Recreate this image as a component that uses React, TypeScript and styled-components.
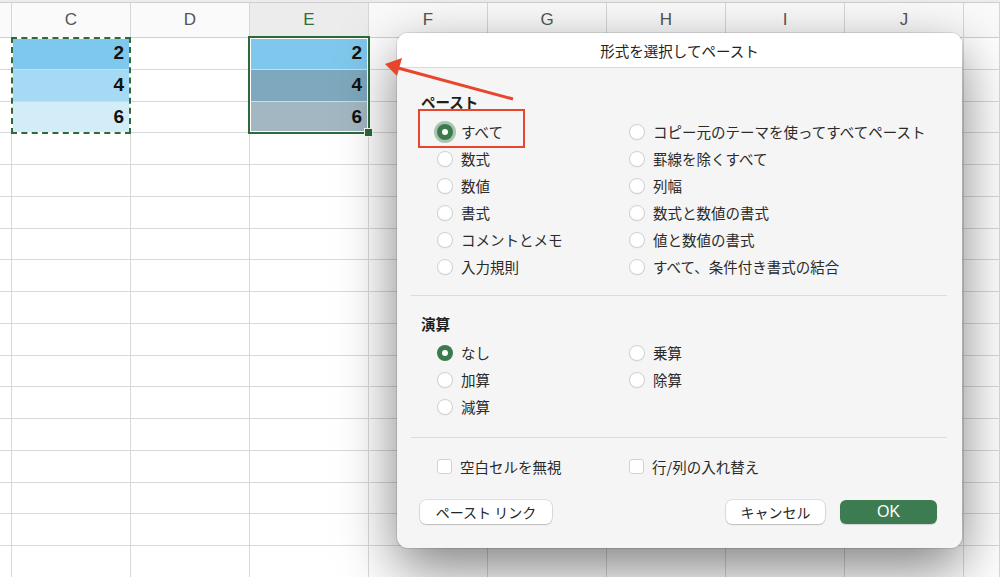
import React from 'react';
import styled, {createGlobalStyle, css} from "styled-components";

const GlobalStyle = createGlobalStyle`
    html, body {
        margin:0;
        padding:0;
        background:#ffffff;
    }
    body {
        font-family: "Noto Sans CJK JP", "Noto Sans", sans-serif;
    }
`;

const Page = styled.div`
    position:relative;
    width:1000px;
    height:577px;
    overflow:hidden;
    background:#ffffff;
`;

const TopStrip = styled.div`
    height:2px;
    background:#ececec;
    border-bottom:1px solid #cfcfcf;
`;

const Sheet = styled.div`
    display:grid;
    grid-template-columns: 12px repeat(8, 119px) 1fr;
    grid-template-rows: 35px;
    grid-auto-rows: 31.75px;
`;

const HeadCell = styled.div<{ $active?: boolean }>`
    box-sizing:border-box;
    border-right:1px solid #d6d6d6;
    border-bottom:1px solid #cfcfcf;
    background:${({$active}) => $active ? "#ececec" : "#fafafa"};
    color:${({$active}) => $active ? "#2f6e3f" : "#555555"};
    font-family: "Liberation Sans", "Noto Sans", sans-serif;
    font-size:17px;
    display:flex;
    align-items:center;
    justify-content:center;
`;

const Cell = styled.div<{ $bg?: string }>`
    box-sizing:border-box;
    border-right:1px solid #d9d9d9;
    border-bottom:1px solid #d9d9d9;
    background:${({$bg}) => $bg || "#ffffff"};
    font-family: "Liberation Sans", "Noto Sans", sans-serif;
    font-weight:700;
    font-size:19px;
    color:#111;
    display:flex;
    align-items:center;
    justify-content:flex-end;
    padding-right:6px;
`;

const CopyMarquee = styled.div`
    position:absolute;
    left:11px;
    top:37px;
    width:120px;
    height:97px;
    box-sizing:border-box;
    border:2px solid #ffffff;
    &::after {
        content:"";
        position:absolute;
        inset:-2px;
        border:2px dashed #2e6a3b;
    }
`;

const Selection = styled.div`
    position:absolute;
    left:248px;
    top:36px;
    width:122px;
    height:98px;
    box-sizing:border-box;
    border:2px solid #2c6a3b;
    box-shadow: inset 0 0 0 1px #ffffff;
`;

const FillHandle = styled.div`
    position:absolute;
    right:-5px;
    bottom:-5px;
    width:7px;
    height:7px;
    background:#2c6a3b;
    border:1px solid #ffffff;
`;

const Dialog = styled.div`
    position:absolute;
    left:397px;
    top:33px;
    width:565px;
    height:515px;
    box-sizing:border-box;
    border-radius:11px;
    background:#f5f5f5;
    box-shadow: 0 20px 55px rgba(0,0,0,0.5), 0 0 0 1px rgba(0,0,0,0.1);
    overflow:hidden;
    display:flex;
    flex-direction:column;
    color:#262626;
    font-size:14.5px;
`;

const TitleBar = styled.div`
    height:34px;
    background:#ffffff;
    border-bottom:1px solid #dadada;
    display:flex;
    align-items:center;
    justify-content:center;
    font-size:14.5px;
    color:#222;
`;

const Body = styled.div`
    flex:1;
    display:flex;
    flex-direction:column;
    padding:0 15px 24px 14px;
`;

const SectionLabel = styled.div<{ $top: number }>`
    margin-top:${({$top}) => $top}px;
    padding-left:10px;
    height:16px;
    line-height:16px;
    font-weight:700;
    font-size:14.5px;
    color:#1e1e1e;
`;

const OptionGrid = styled.div<{ $top: number }>`
    margin-top:${({$top}) => $top}px;
    padding-left:26px;
    display:grid;
    grid-template-columns: 192px 1fr;
    grid-auto-flow:column;
    grid-auto-rows:27px;
`;

const Option = styled.label<{ $row: number; $col: number }>`
    grid-row:${({$row}) => $row};
    grid-column:${({$col}) => $col};
    display:flex;
    align-items:center;
    gap:8px;
    font-size:14.5px;
    line-height:18px;
    color:#2a2a2a;
    white-space:nowrap;
`;

const Radio = styled.span<{ $checked?: boolean; $focus?: boolean }>`
    box-sizing:border-box;
    width:16px;
    height:16px;
    border-radius:50%;
    flex:none;
    ${({$checked}) => $checked ? css`
        background:#3b7a4d;
        border:none;
        display:flex;
        align-items:center;
        justify-content:center;
        &::after {
            content:"";
            width:6px;
            height:6px;
            border-radius:50%;
            background:#ffffff;
        }
    ` : css`
        background:#ffffff;
        border:1px solid #d2d2d2;
        box-shadow:0 0.5px 1px rgba(0,0,0,0.08);
    `}
    ${({$focus}) => $focus && css`
        box-shadow:0 0 0 3px rgba(59,122,77,0.4);
    `}
`;

const Divider = styled.div<{ $top: number }>`
    margin-top:${({$top}) => $top}px;
    height:1px;
    background:#dcdcdc;
`;

const Checkbox = styled.span`
    box-sizing:border-box;
    width:15px;
    height:15px;
    border-radius:3px;
    background:#ffffff;
    border:1px solid #d2d2d2;
    flex:none;
`;

const ButtonRow = styled.div`
    margin-top:auto;
    display:flex;
    align-items:center;
    padding-left:9px;
    padding-right:10px;
`;

const Button = styled.div<{ $width: number; $primary?: boolean }>`
    box-sizing:border-box;
    width:${({$width}) => $width}px;
    height:24px;
    border-radius:6px;
    display:flex;
    align-items:center;
    justify-content:center;
    font-size:14px;
    ${({$primary}) => $primary ? css`
        background:#3d7b50;
        color:#ffffff;
        font-family:"Liberation Sans", sans-serif;
        font-size:16px;
        margin-left:15px;
        box-shadow:0 1px 1px rgba(0,0,0,0.15);
    ` : css`
        background:#ffffff;
        color:#262626;
        box-shadow:0 0 0 0.5px rgba(0,0,0,0.18), 0 1px 1.5px rgba(0,0,0,0.15);
    `}
`;

const Spacer = styled.div`
    flex:1;
`;

const Highlight = styled.div`
    position:absolute;
    left:418px;
    top:109px;
    width:107px;
    height:39px;
    box-sizing:border-box;
    border:2.5px solid #e8462c;
`;

const ArrowLayer = styled.svg`
    position:absolute;
    left:0;
    top:0;
    pointer-events:none;
`;

const columns = ["C", "D", "E", "F", "G", "H", "I", "J"];

const values: Record<string, { v: string; bg: string }[]> = {
    C: [{v: "2", bg: "#7ec8ee"}, {v: "4", bg: "#a6daf4"}, {v: "6", bg: "#d2ecf8"}],
    E: [{v: "2", bg: "#7fc7ec"}, {v: "4", bg: "#7ea8bd"}, {v: "6", bg: "#a3b7c2"}],
};

const pasteOptions = [
    {label: "すべて", col: 1, row: 1, checked: true, focus: true},
    {label: "数式", col: 1, row: 2},
    {label: "数値", col: 1, row: 3},
    {label: "書式", col: 1, row: 4},
    {label: "コメントとメモ", col: 1, row: 5},
    {label: "入力規則", col: 1, row: 6},
    {label: "コピー元のテーマを使ってすべてペースト", col: 2, row: 1},
    {label: "罫線を除くすべて", col: 2, row: 2},
    {label: "列幅", col: 2, row: 3},
    {label: "数式と数値の書式", col: 2, row: 4},
    {label: "値と数値の書式", col: 2, row: 5},
    {label: "すべて、条件付き書式の結合", col: 2, row: 6},
];

const operationOptions = [
    {label: "なし", col: 1, row: 1, checked: true},
    {label: "加算", col: 1, row: 2},
    {label: "減算", col: 1, row: 3},
    {label: "乗算", col: 2, row: 1},
    {label: "除算", col: 2, row: 2},
];

type OptionItem = { label: string; col: number; row: number; checked?: boolean; focus?: boolean };

const Options = ({items, top}: { items: OptionItem[]; top: number }) => (
    <OptionGrid $top={top}>
        {items.map(o => (
            <Option key={o.label} $row={o.row} $col={o.col}>
                <Radio $checked={o.checked} $focus={o.focus}/>
                {o.label}
            </Option>
        ))}
    </OptionGrid>
);

const ROWS = 17;

const App = () => {
    return (
        <>
            <GlobalStyle/>
            <Page>
                <TopStrip/>
                <Sheet>
                    <HeadCell/>
                    {columns.map(c => (
                        <HeadCell key={c} $active={c === "E"}>{c}</HeadCell>
                    ))}
                    <HeadCell/>
                    {Array.from({length: ROWS}).map((_, r) => (
                        <React.Fragment key={r}>
                            <Cell/>
                            {columns.map(c => {
                                const data = values[c]?.[r];
                                return <Cell key={c} $bg={data?.bg}>{data?.v}</Cell>;
                            })}
                            <Cell/>
                        </React.Fragment>
                    ))}
                </Sheet>
                <CopyMarquee/>
                <Selection>
                    <FillHandle/>
                </Selection>

                <Dialog>
                    <TitleBar>形式を選択してペースト</TitleBar>
                    <Body>
                        <SectionLabel $top={26}>ペースト</SectionLabel>
                        <Options items={pasteOptions} top={8}/>
                        <Divider $top={15}/>
                        <SectionLabel $top={20}>演算</SectionLabel>
                        <Options items={operationOptions} top={7}/>
                        <Divider $top={17}/>
                        <OptionGrid $top={15}>
                            <Option $row={1} $col={1}>
                                <Checkbox/>
                                空白セルを無視
                            </Option>
                            <Option $row={1} $col={2}>
                                <Checkbox/>
                                行/列の入れ替え
                            </Option>
                        </OptionGrid>
                        <ButtonRow>
                            <Button $width={132}>ペースト リンク</Button>
                            <Spacer/>
                            <Button $width={99}>キャンセル</Button>
                            <Button $width={97} $primary>OK</Button>
                        </ButtonRow>
                    </Body>
                </Dialog>

                <Highlight/>
                <ArrowLayer width={1000} height={577} viewBox="0 0 1000 577">
                    <line x1={513} y1={99} x2={398} y2={68} stroke="#e8462c" strokeWidth={3}/>
                    <polygon points="385,64 402,58 397,76" fill="#e8462c"/>
                </ArrowLayer>
            </Page>
        </>
    );
};

export default App;
